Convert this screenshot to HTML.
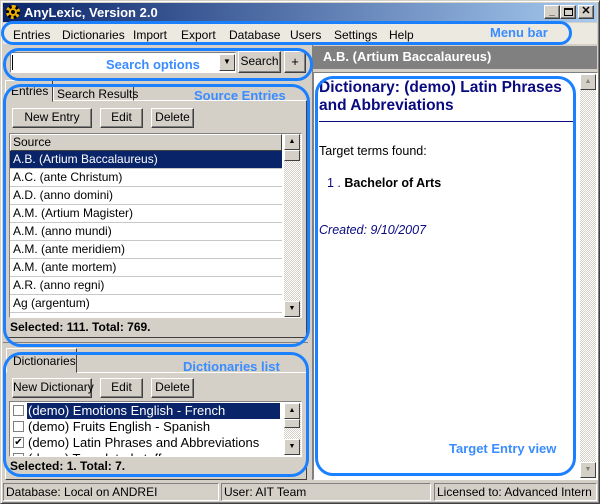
<!DOCTYPE html>
<html><head><style>
*{box-sizing:border-box;margin:0;padding:0}
html,body{width:600px;height:504px;overflow:hidden}
body{background:#d4d0c8;position:relative;font-family:"Liberation Sans",Arial,sans-serif;font-size:12px;color:#000;white-space:nowrap}
.a{position:absolute}
.btn{position:absolute;background:#d4d0c8;border:1px solid;border-color:#fff #404040 #404040 #fff;box-shadow:inset -1px -1px #808080;text-align:center;font-size:12px;line-height:17px}
.sunk{border:1px solid;border-color:#808080 #fff #fff #808080}
.row{position:absolute;left:0;width:272px;height:18px;line-height:17px;padding-left:3px;border-bottom:1px solid #c8c8c8;font-size:12px}
.ann{position:absolute;border:3px solid #1a80ff}
.lbl{position:absolute;color:#3a8cff;font-family:"Liberation Sans",sans-serif;font-weight:bold;font-size:13px}
.sb{position:absolute;background:repeating-conic-gradient(#d4d0c8 0 25%,#fff 0 50%) 0 0/2px 2px}
.arr{position:absolute;width:16px;height:16px;background:#d4d0c8;border:1px solid;border-color:#fff #404040 #404040 #fff;font-size:7px;text-align:center;line-height:14px}
</style></head><body>
<div class="a" style="left:0;top:0;width:600px;height:504px;border:1px solid;border-color:#d4d0c8 #404040 #404040 #d4d0c8;box-shadow:inset 1px 1px #fff,inset -1px -1px #808080"></div>
<div class="a" style="left:3px;top:3px;width:594px;height:19px;background:linear-gradient(90deg,#0a246a,#a6caf0)"></div>
<div class="a" style="left:6px;top:5px;width:14px;height:14px;border-radius:50%;border:3px dotted #f0b000;background:#000"></div>
<div class="a" style="left:9px;top:8px;width:8px;height:8px;border-radius:50%;border:2px solid #f0b000"></div>
<div class="a" style="left:24px;top:4px;color:#fff;font-weight:bold;font-size:13px;line-height:17px">AnyLexic, Version 2.0</div>
<div class="btn" style="left:544px;top:5px;width:16px;height:14px;line-height:11px;font-weight:bold;font-size:10px">_</div>
<div class="btn" style="left:560px;top:5px;width:16px;height:14px"><div class="a" style="left:3px;top:2px;width:9px;height:8px;border:1px solid #000;border-top-width:2px"></div></div>
<div class="btn" style="left:578px;top:5px;width:16px;height:14px;line-height:11px;font-weight:bold;font-size:11px">✕</div>
<div class="a" style="left:3px;top:23px;width:594px;height:21px;background:#ece9e0"></div>
<div class="a" style="left:13px;top:28px;font-size:12px">
<span style="position:absolute;left:0">Entries</span><span style="position:absolute;left:49px">Dictionaries</span><span style="position:absolute;left:120px">Import</span><span style="position:absolute;left:168px">Export</span><span style="position:absolute;left:216px">Database</span><span style="position:absolute;left:277px">Users</span><span style="position:absolute;left:321px">Settings</span><span style="position:absolute;left:376px">Help</span></div>
<div class="a sunk" style="left:10px;top:52px;width:226px;height:21px;background:#fff"></div>
<div class="a" style="left:12px;top:55px;width:1px;height:15px;background:#000"></div>
<div class="arr" style="left:219px;top:54px;height:17px;font-size:8px">▼</div>
<div class="btn" style="left:238px;top:51px;width:43px;height:22px;line-height:19px">Search</div>
<div class="btn" style="left:284px;top:51px;width:22px;height:22px;line-height:19px;font-size:13px">+</div>
<div class="a" style="left:5px;top:100px;width:302px;height:238px;border:1px solid;border-color:#fff #404040 #404040 #fff"></div>
<div class="a" style="left:5px;top:80px;width:48px;height:22px;border:1px solid;border-color:#fff #404040 transparent #fff;background:#d4d0c8"></div>
<div class="a" style="left:11px;top:84px">Entries</div>
<div class="a" style="left:53px;top:84px;width:81px;height:17px;border:1px solid;border-color:#fff #404040 transparent #fff"></div>
<div class="a" style="left:57px;top:87px">Search Results</div>
<div class="btn" style="left:12px;top:108px;width:80px;height:20px">New Entry</div>
<div class="btn" style="left:100px;top:108px;width:43px;height:20px">Edit</div>
<div class="btn" style="left:151px;top:108px;width:43px;height:20px">Delete</div>
<div class="a sunk" style="left:9px;top:133px;width:293px;height:185px;background:#fff"></div>
<div class="a" style="left:10px;top:134px;width:272px;height:17px;background:#d4d0c8;border:1px solid;border-color:#fff #404040 #404040 #fff;padding-left:2px;line-height:15px">Source</div>
<div class="a" style="left:10px;top:151px;width:272px;height:165px;overflow:hidden">
<div class="row" style="top:0;background:#0a246a;color:#fff">A.B. (Artium Baccalaureus)</div>
<div class="row" style="top:18px">A.C. (ante Christum)</div>
<div class="row" style="top:36px">A.D. (anno domini)</div>
<div class="row" style="top:54px">A.M. (Artium Magister)</div>
<div class="row" style="top:72px">A.M. (anno mundi)</div>
<div class="row" style="top:90px">A.M. (ante meridiem)</div>
<div class="row" style="top:108px">A.M. (ante mortem)</div>
<div class="row" style="top:126px">A.R. (anno regni)</div>
<div class="row" style="top:144px">Ag (argentum)</div>
</div>
<div class="sb" style="left:284px;top:134px;width:17px;height:183px"></div>
<div class="arr" style="left:284px;top:134px">▲</div>
<div class="arr" style="left:284px;top:150px;height:11px"></div>
<div class="arr" style="left:284px;top:301px">▼</div>
<div class="a" style="left:10px;top:320px;font-weight:bold">Selected: 111. Total: 769.</div>
<div class="a" style="left:3px;top:342px;width:305px;height:1px;background:#808080"></div>
<div class="a" style="left:5px;top:372px;width:302px;height:108px;border:1px solid;border-color:#fff #404040 #404040 #fff"></div>
<div class="a" style="left:6px;top:348px;width:71px;height:25px;border:1px solid;border-color:#fff #404040 transparent #fff;background:#d4d0c8"></div>
<div class="a" style="left:13px;top:354px">Dictionaries</div>
<div class="btn" style="left:12px;top:378px;width:80px;height:20px">New Dictionary</div>
<div class="btn" style="left:100px;top:378px;width:43px;height:20px">Edit</div>
<div class="btn" style="left:151px;top:378px;width:43px;height:20px">Delete</div>
<div class="a sunk" style="left:9px;top:401px;width:293px;height:56px;background:#fff;overflow:hidden">
<div class="a" style="left:17px;top:1px;width:253px;height:16px;background:#0a246a"></div>
<div class="a" style="left:3px;top:3px;width:11px;height:11px;border:1px solid #808080;background:#fff"></div>
<div class="a" style="left:3px;top:19px;width:11px;height:11px;border:1px solid #808080;background:#fff"></div>
<div class="a" style="left:3px;top:35px;width:11px;height:11px;border:1px solid #808080;background:#fff;font-size:10px;line-height:9px;text-align:center">✔</div>
<div class="a" style="left:3px;top:51px;width:11px;height:11px;border:1px solid #808080;background:#fff"></div>
<div class="a" style="left:18px;top:1px;color:#fff;font-size:13px;line-height:16px">(demo) Emotions English - French</div>
<div class="a" style="left:18px;top:17px;font-size:13px;line-height:16px">(demo) Fruits English - Spanish</div>
<div class="a" style="left:18px;top:33px;font-size:13px;line-height:16px">(demo) Latin Phrases and Abbreviations</div>
<div class="a" style="left:18px;top:49px;font-size:13px;line-height:16px">(demo) Translated stuff</div>
</div>
<div class="sb" style="left:284px;top:403px;width:17px;height:52px"></div>
<div class="arr" style="left:284px;top:403px">▲</div>
<div class="arr" style="left:284px;top:419px;height:9px"></div>
<div class="arr" style="left:284px;top:439px">▼</div>
<div class="a" style="left:10px;top:459px;font-weight:bold">Selected: 1. Total: 7.</div>
<div class="a" style="left:310px;top:44px;width:3px;height:436px;background:#d4d0c8;border-right:1px solid #808080"></div>
<div class="a" style="left:313px;top:46px;width:284px;height:23px;background:#808080"></div>
<div class="a" style="left:323px;top:49px;color:#fff;font-weight:bold;font-size:13px">A.B. (Artium Baccalaureus)</div>
<div class="a sunk" style="left:313px;top:72px;width:285px;height:408px;background:#fff"></div>
<div class="sb" style="left:580px;top:74px;width:16px;height:404px"></div>
<div class="arr" style="left:580px;top:74px;color:#808080">▲</div>
<div class="arr" style="left:580px;top:462px;color:#808080">▼</div>
<div class="a" style="left:319px;top:79px;width:260px;color:#0a0a80;font-weight:bold;font-size:15.5px;line-height:18px;white-space:normal">Dictionary: (demo) Latin Phrases and Abbreviations</div>
<div class="a" style="left:319px;top:121px;width:254px;height:1px;background:#0a0a80"></div>
<div class="a" style="left:319px;top:144px;font-size:12.5px">Target terms found:</div>
<div class="a" style="left:327px;top:176px;font-size:12.5px"><span style="color:#0a0a80">1 . </span><b>Bachelor of Arts</b></div>
<div class="a" style="left:319px;top:223px;font-size:12.5px;font-style:italic;color:#0a0a80">Created: 9/10/2007</div>
<div class="a sunk" style="left:3px;top:483px;width:216px;height:18px;padding-left:2px;line-height:16px;overflow:hidden">Database: Local on ANDREI</div>
<div class="a sunk" style="left:221px;top:483px;width:210px;height:18px;padding-left:2px;line-height:16px;overflow:hidden">User: AIT Team</div>
<div class="a sunk" style="left:434px;top:483px;width:163px;height:18px;padding-left:2px;line-height:16px;overflow:hidden">Licensed to: Advanced Intern</div>
<div class="ann" style="left:1px;top:21px;width:571px;height:24px;border-radius:12px"></div>
<div class="lbl" style="left:490px;top:25px">Menu bar</div>
<div class="ann" style="left:3px;top:48px;width:310px;height:33px;border-radius:16px"></div>
<div class="lbl" style="left:106px;top:57px">Search options</div>
<div class="ann" style="left:3px;top:84px;width:307px;height:263px;border-radius:18px"></div>
<div class="lbl" style="left:194px;top:88px">Source Entries</div>
<div class="ann" style="left:3px;top:352px;width:306px;height:125px;border-radius:18px"></div>
<div class="lbl" style="left:183px;top:359px">Dictionaries list</div>
<div class="ann" style="left:315px;top:76px;width:261px;height:400px;border-radius:18px"></div>
<div class="lbl" style="left:449px;top:441px">Target Entry view</div>
</body></html>
